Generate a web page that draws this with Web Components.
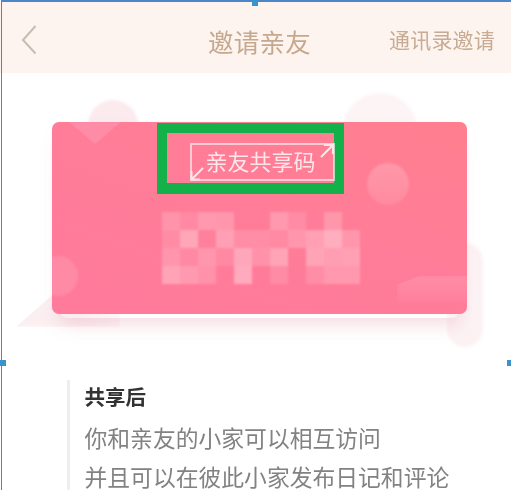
<!DOCTYPE html>
<html lang="zh">
<head>
<meta charset="utf-8">
<title>邀请亲友</title>
<style>
  html, body { margin: 0; height: 100%; background: #fff; overflow: hidden; }
  body { font-family: "Noto Sans CJK SC", "Noto Sans", sans-serif; }
</style>
</head>
<body>
<invite-screen>
  <nav-bar title="邀请亲友" action="通讯录邀请"></nav-bar>
  <share-card label="亲友共享码"></share-card>
  <share-note heading="共享后">
    <p>你和亲友的小家可以相互访问</p>
    <p>并且可以在彼此小家发布日记和评论</p>
  </share-note>
</invite-screen>
<selection-frame></selection-frame>

<script>
const navTemplate = document.createElement("template");
navTemplate.innerHTML = `
<style>
  :host {
    display: grid;
    grid-template-columns: 1fr auto 1fr;
    align-items: center;
    height: 71px;
    padding: 0 16px 0 21px;
    background: #fdf4ef;
    color: #c8ab92;
  }
  svg { width: 16px; height: 30px; margin-top: 5px; }
  #title {
    font-size: 25.500px;
    letter-spacing: 0.2px;
    margin: 5px 0 0 3px;
    color: #c6a88e;
    filter: blur(0.5px);
  }
  #action {
    justify-self: end;
    font-size: 21px;
    letter-spacing: 0.2px;
    margin-top: 3px;
    filter: blur(0.5px);
  }
</style>
<svg viewBox="0 0 16 30" fill="none" stroke="#c8bcb1" stroke-width="2">
  <path d="M14.5 1 L2 15 L14.5 28.500"/>
</svg>
<div id="title"></div>
<div id="action"></div>
`;

class NavBar extends HTMLElement {
  constructor() {
    super();
    const shadowRoot = this.attachShadow({ mode: "open" });
    shadowRoot.appendChild(navTemplate.content.cloneNode(true));
    shadowRoot.querySelector("#title").textContent = this.getAttribute("title");
    shadowRoot.querySelector("#action").textContent = this.getAttribute("action");
  }
}

const mosaicTemplate = document.createElement("template");
mosaicTemplate.innerHTML = `
<style>
  :host {
    display: grid;
    grid-template-columns: repeat(11, 18px);
    grid-auto-rows: 18px;
    width: 198px;
    filter: blur(1px);
  }
  div { background: #fff; }
</style>
`;

// opacity of each blurred cell, row by row
const MOSAIC = [
  [.18, .1, .22, .2, 0, 0, .22, .12, 0, .2, 0],
  [.12, .32, .03, .27, .13, .13, .1, .2, .27, .38, .2],
  [.2, .1, .2, .1, .33, .17, .3, 0, .3, .25, .27],
  [.3, .23, .17, 0, .36, 0, .12, 0, .13, .22, .22],
];

class CodeMosaic extends HTMLElement {
  constructor() {
    super();
    const shadowRoot = this.attachShadow({ mode: "open" });
    shadowRoot.appendChild(mosaicTemplate.content.cloneNode(true));
    MOSAIC.flat().forEach((o) => {
      const cell = document.createElement("div");
      cell.style.opacity = o;
      shadowRoot.appendChild(cell);
    });
  }
}

const cardTemplate = document.createElement("template");
cardTemplate.innerHTML = `
<style>
  :host {
    display: block;
    position: relative;
    height: 307px;
  }
  .bg { position: absolute; background: #fcf2f4; filter: blur(1.5px); }
  #bg-a { left: 88px; top: 27px; width: 50px; height: 60px; border-radius: 25px 25px 0 0; background: #fbeaee; }
  #bg-b { left: 343px; top: 20px; width: 74px; height: 60px; border-radius: 37px 37px 0 0; background: #fdf4f5; }
  #bg-c { left: 447px; top: 170px; width: 36px; height: 104px; border-radius: 18px; }
  #bg-d {
    left: 16px; top: 221px; width: 104px; height: 33px;
    clip-path: polygon(0 100%, 36% 0, 100% 0, 100% 100%);
    background: linear-gradient(90deg, #fbeff1, #fbeef1 60%, #fdf6f7);
  }
  #card {
    position: absolute;
    left: 52px;
    top: 49px;
    width: 415px;
    height: 192px;
    box-sizing: border-box;
    padding-top: 1px;
    border-radius: 7px;
    overflow: hidden;
    background: linear-gradient(20deg, #ff7a9b 0%, #ff7d98 55%, #ff7f8f 100%);
  }
  #shadow {
    position: absolute;
    left: 60px;
    top: 59px;
    width: 399px;
    height: 186px;
    border-radius: 7px;
    box-shadow: 0 6px 18px rgba(225, 150, 170, 0.35);
  }
  .deco { position: absolute; filter: blur(0.8px); }
  #tri {
    left: 16px; top: -1px; width: 54px; height: 23px;
    background: #ff8ca7;
    clip-path: polygon(0 0, 100% 0, 50% 100%);
  }
  #dot-a {
    left: -14px; top: 134px; width: 40px; height: 40px; border-radius: 50%;
    background: #ff8aa5;
  }
  #dot-b {
    left: 315px; top: 41px; width: 42px; height: 42px; border-radius: 50%;
    background: linear-gradient(#ff98aa, #ff8aa0);
  }
  #stripe {
    left: 345px; top: 154px; width: 71px; height: 26px;
    background: linear-gradient(#ff8da5, #ff809c);
    clip-path: polygon(32% 0, 100% 0, 100% 100%, 0 100%, 0 35%);
  }
  #mark {
    position: relative;
    box-sizing: border-box;
    width: 187px;
    height: 71px;
    margin-left: 105px;
    border: 10px solid #14b04a;
    border-bottom-width: 11px;
    display: flex;
    justify-content: flex-end;
    align-items: flex-start;
  }
  #label {
    position: relative;
    box-sizing: border-box;
    width: 145px;
    height: 38px;
    margin-top: 10px;
    margin-right: -1px;
    border: 2px solid rgba(255, 235, 238, 0.7);
    color: #ffe6ea;
    font-size: 22px;
    line-height: 30px;
    text-align: center;
    padding-right: 4px;
    filter: blur(0.4px);
  }
  #label svg { position: absolute; left: -2px; top: -2px; width: 145px; height: 38px; }
  code-mosaic { position: relative; margin: 18px 0 0 110px; }
</style>
<div class="bg" id="bg-a"></div>
<div class="bg" id="bg-b"></div>
<div class="bg" id="bg-c"></div>
<div class="bg" id="bg-d"></div>
<div id="shadow"></div>
<div id="card">
  <div class="deco" id="tri"></div>
  <div class="deco" id="dot-a"></div>
  <div class="deco" id="dot-b"></div>
  <div class="deco" id="stripe"></div>
  <div id="mark">
    <div id="label">
      <span id="text"></span>
      <svg viewBox="0 0 145 38" fill="none" stroke="#ffe6ea" stroke-width="2">
        <path d="M131 14 L143 2 M134 2 H143 V11"/>
        <path d="M13 25 L1.500 36.500 M1.500 28 V36.500 H10"/>
      </svg>
    </div>
  </div>
  <code-mosaic></code-mosaic>
</div>
`;

class ShareCard extends HTMLElement {
  constructor() {
    super();
    const shadowRoot = this.attachShadow({ mode: "open" });
    shadowRoot.appendChild(cardTemplate.content.cloneNode(true));
    shadowRoot.querySelector("#text").textContent = this.getAttribute("label");
  }
}

const noteTemplate = document.createElement("template");
noteTemplate.innerHTML = `
<style>
  :host {
    display: flex;
    flex-direction: column;
    gap: 13px;
    height: 110px;
    box-sizing: border-box;
    margin-left: 67px;
    padding-left: 14.500px;
    border-left: 3px solid #eeeeee;
  }
  h2 {
    margin: 0 0 -1px;
    font-size: 20.500px;
    line-height: 33px;
    font-weight: 700;
    color: #333;
    filter: blur(0.4px);
  }
  ::slotted(p) {
    margin: 0;
    font-size: 22.800px;
    line-height: 26px;
    white-space: nowrap;
    color: #828282;
    filter: blur(0.4px);
  }
</style>
<h2></h2>
<slot></slot>
`;

class ShareNote extends HTMLElement {
  constructor() {
    super();
    const shadowRoot = this.attachShadow({ mode: "open" });
    shadowRoot.appendChild(noteTemplate.content.cloneNode(true));
    shadowRoot.querySelector("h2").textContent = this.getAttribute("heading");
  }
}

const screenTemplate = document.createElement("template");
screenTemplate.innerHTML = `
<style>
  :host {
    display: block;
    padding-top: 2px;
    height: 488px;
    overflow: hidden;
    background: #fff;
  }
</style>
<slot></slot>
`;

class InviteScreen extends HTMLElement {
  constructor() {
    super();
    const shadowRoot = this.attachShadow({ mode: "open" });
    shadowRoot.appendChild(screenTemplate.content.cloneNode(true));
  }
}

const frameTemplate = document.createElement("template");
frameTemplate.innerHTML = `
<style>
  :host {
    position: fixed;
    left: 0;
    top: 0;
    width: 511px;
    height: 490px;
    pointer-events: none;
  }
  #top { position: absolute; left: 1px; top: 0; right: 0; height: 2px; background: #4a86c8; }
  #left { position: absolute; left: 1px; top: 0; bottom: 0; width: 1px; background: #4a86c8; }
  .handle { position: absolute; width: 6px; height: 6px; background: #3a94cc; }
</style>
<div id="top"></div>
<div id="left"></div>
<div class="handle" style="left: 252px; top: 0"></div>
<div class="handle" style="left: 0; top: 360px"></div>
<div class="handle" style="left: 507px; top: 360px"></div>
`;

class SelectionFrame extends HTMLElement {
  constructor() {
    super();
    const shadowRoot = this.attachShadow({ mode: "open" });
    shadowRoot.appendChild(frameTemplate.content.cloneNode(true));
  }
}

window.customElements.define("nav-bar", NavBar);
window.customElements.define("code-mosaic", CodeMosaic);
window.customElements.define("share-card", ShareCard);
window.customElements.define("share-note", ShareNote);
window.customElements.define("invite-screen", InviteScreen);
window.customElements.define("selection-frame", SelectionFrame);
</script>
</body>
</html>
